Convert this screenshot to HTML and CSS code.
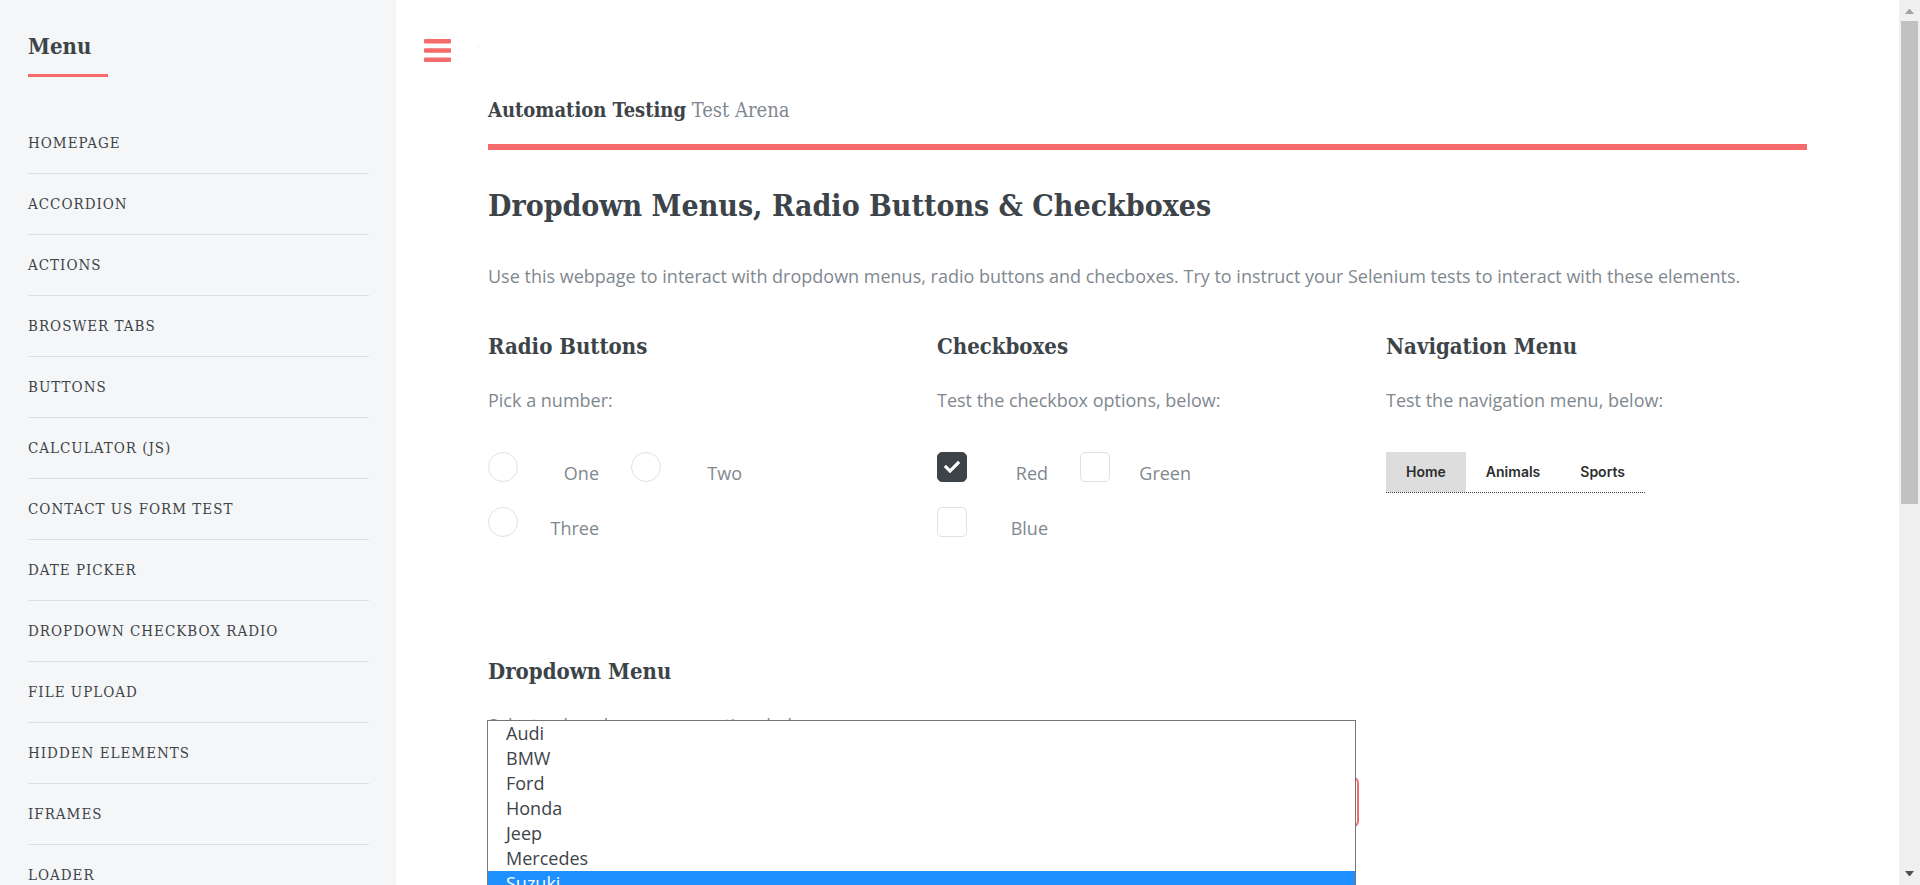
FILE: index.html
```html
<!DOCTYPE html>
<html lang="en">
<head>
<meta charset="utf-8">
<title>Dropdown Menus, Radio Buttons &amp; Checkboxes</title>
<link rel="stylesheet" href="styles.css">
</head>
<body>
<div class="page">
  <aside class="sidebar">
    <h2 class="sidebar-title">Menu</h2>
    <nav>
      <ul class="menu">
        <li><a href="#">Homepage</a></li>
        <li><a href="#">Accordion</a></li>
        <li><a href="#">Actions</a></li>
        <li><a href="#">Broswer Tabs</a></li>
        <li><a href="#">Buttons</a></li>
        <li><a href="#">Calculator (JS)</a></li>
        <li><a href="#">Contact Us Form Test</a></li>
        <li><a href="#">Date Picker</a></li>
        <li><a href="#">Dropdown Checkbox Radio</a></li>
        <li><a href="#">File Upload</a></li>
        <li><a href="#">Hidden Elements</a></li>
        <li><a href="#">iFrames</a></li>
        <li><a href="#">Loader</a></li>
      </ul>
    </nav>
  </aside>

  <div class="rail">
    <button class="toggle" type="button" aria-label="Toggle menu">
      <svg viewBox="0 0 27 23" width="27" height="23"><path d="M1 0h25a1 1 0 0 1 1 1v2.400a1 1 0 0 1-1 1H1a1 1 0 0 1-1-1V1a1 1 0 0 1 1-1zM1 9.300h25a1 1 0 0 1 1 1v2.400a1 1 0 0 1-1 1H1a1 1 0 0 1-1-1v-2.400a1 1 0 0 1 1-1zM1 18.600h25a1 1 0 0 1 1 1V22a1 1 0 0 1-1 1H1a1 1 0 0 1-1-1v-2.400a1 1 0 0 1 1-1z"/></svg>
    </button>
    <span class="speck"></span>
  </div>

  <main class="main">
    <header class="header"><a class="logo" href="#"><strong>Automation Testing</strong> Test Arena</a></header>
    <h1 class="title">Dropdown Menus, Radio Buttons &amp; Checkboxes</h1>
    <p class="intro">Use this webpage to interact with dropdown menus, radio buttons and checboxes. Try to instruct your Selenium tests to interact with these elements.</p>

    <div class="columns">
      <section>
        <h3>Radio Buttons</h3>
        <p>Pick a number:</p>
        <div class="choices">
          <label class="choice"><input type="radio" name="number"><span>One</span></label>
          <label class="choice"><input type="radio" name="number"><span>Two</span></label>
          <label class="choice"><input type="radio" name="number"><span>Three</span></label>
        </div>
      </section>
      <section>
        <h3>Checkboxes</h3>
        <p>Test the checkbox options, below:</p>
        <div class="choices">
          <label class="choice"><input type="checkbox" checked><svg class="tick" viewBox="0 0 512 512" width="16" height="16"><path d="M174 439 8 272c-10-10-10-26 0-36l36-36c10-10 26-10 36 0l112 112L432 72c10-10 26-10 36 0l36 36c10 10 10 26 0 36L210 439c-10 10-26 10-36 0z"/></svg><span>Red</span></label>
          <label class="choice"><input type="checkbox"><span>Green</span></label>
          <label class="choice"><input type="checkbox"><span>Blue</span></label>
        </div>
      </section>
      <section>
        <h3>Navigation Menu</h3>
        <p>Test the navigation menu, below:</p>
        <nav class="tabs"><a class="current" href="#">Home</a><a href="#">Animals</a><a href="#">Sports</a></nav>
      </section>
      <section class="wide">
        <h3>Dropdown Menu</h3>
        <p><label for="cars">Select a dropdown menu option, below:</label></p>
        <div class="picker">
          <select id="cars">
            <option>Audi</option><option>BMW</option><option>Ford</option><option>Honda</option><option>Jeep</option><option>Mercedes</option><option selected>Suzuki</option>
          </select>
          <ul class="popup" role="listbox" aria-label="Cars">
            <li role="option">Audi</li>
            <li role="option">BMW</li>
            <li role="option">Ford</li>
            <li role="option">Honda</li>
            <li role="option">Jeep</li>
            <li role="option">Mercedes</li>
            <li role="option" aria-selected="true">Suzuki</li>
          </ul>
        </div>
      </section>
    </div>
  </main>

  <div class="scrollbar" aria-hidden="true">
    <svg viewBox="0 0 21 21" width="21" height="21"><path fill="#a3a3a3" d="M6 14h9l-4-5h-1z"/></svg>
    <div class="track"><div class="thumb"></div></div>
    <svg viewBox="0 0 21 21" width="21" height="21"><path fill="#505050" d="M6 7h9l-4 5h-1z"/></svg>
  </div>
</div>
</body>
</html>
```
FILE: styles.css
```css
* { box-sizing: border-box; margin: 0; padding: 0; }

body {
  font-family: "Open Sans", "Noto Sans", sans-serif;
  font-size: 18px;
  line-height: 30px;
  color: #7f888f;
  background: #fff;
}

ul { list-style: none; }
a { color: inherit; text-decoration: none; }

h1, h2, h3, .logo, .menu {
  font-family: "Roboto Slab", "DejaVu Serif Condensed", "DejaVu Serif", serif;
}

h1, h2, h3 { color: #3d4449; font-weight: 700; }

.page { display: flex; height: 100vh; overflow: hidden; }

/* Sidebar */
.sidebar { flex: 0 0 396px; padding: 31px 27px 0 28px; background: #f5f6f7; }
.sidebar-title {
  width: 80px;
  padding-bottom: 13px;
  border-bottom: 3px solid #f56a6a;
  font-size: 22px;
  line-height: 30px;
}
.menu { margin-top: 36px; }
.menu li + li { border-top: 1px solid #dcdee0; }
.menu a {
  display: block;
  padding-top: 1px;
  font-size: 15px;
  line-height: 59px;
  letter-spacing: 1px;
  color: #3d4449;
  text-transform: uppercase;
  white-space: nowrap;
}

/* Toggle */
.rail { flex: 0 0 92px; display: flex; gap: 27px; padding: 39px 0 0 28px; }
.toggle { width: 27px; height: 23px; border: 0; background: none; cursor: pointer; }
.toggle svg { display: block; fill: #f56a6a; }
.speck { width: 1px; height: 1px; margin-top: 7px; background: #ffcf90; }

/* Content */
.main { flex: 1; min-width: 0; padding: 95px 92px 0 0; }
.header { padding-bottom: 19px; border-bottom: 6px solid #f56a6a; font-size: 20px; }
.logo { display: block; }
.logo strong { color: #3d4449; }
.title { margin-top: 34px; font-size: 30px; line-height: 44px; }
.intro { margin-top: 33px; }

.columns { display: grid; grid-template-columns: repeat(3, 1fr); column-gap: 28px; row-gap: 119px; margin-top: 40px; }
.columns h3 { font-size: 22px; }
.columns p { margin: 24px 0 37px; }
.wide { grid-column: span 2; }

.choices { display: grid; grid-template-columns: 111px 111px; gap: 25px 32px; }
.choice { position: relative; display: flex; justify-content: space-between; height: 30px; }
.choice span { line-height: 43px; }
.choice input {
  appearance: none;
  width: 30px;
  height: 30px;
  border: 1px solid #dfe1e3;
  border-radius: 5px;
  background: #fff;
}
.choice input[type="radio"] { border-radius: 50%; }
.choice input:checked { border-color: #3d4449; background: #3d4449; }
.tick { position: absolute; left: 7px; top: 7px; fill: #fff; }

.tabs { display: inline-flex; border-bottom: 1px dotted #333; }
.tabs a {
  padding: 0 20px;
  font-family: Inter, "Liberation Sans", Arial, sans-serif;
  font-size: 14px;
  font-weight: 600;
  line-height: 40px;
  color: #2d2d2d;
}
.tabs .current { background: #ddd; }

.picker { position: relative; }
.picker select {
  display: block;
  width: 100%;
  height: 50px;
  padding: 0 18px;
  appearance: none;
  border: 1px solid #f56a6a;
  border-radius: 6px;
  box-shadow: 0 0 0 1px #f56a6a;
  background: #fff;
  color: #3d4449;
  font: inherit;
}
.popup {
  position: absolute;
  top: -57px;
  left: -1px;
  right: 2px;
  border: 1px solid #767676;
  background: #fff;
  color: #3d4449;
}
.popup li { padding-left: 18px; line-height: 25px; }
.popup [aria-selected="true"] { background: #1e90ff; color: #fff; }

/* Scrollbar */
.scrollbar { flex: 0 0 21px; display: flex; flex-direction: column; background: #f0f0f0; }
.scrollbar svg { display: block; flex: none; }
.track { flex: 1; padding: 0 2px; }
.thumb { height: 57.3%; background: #c1c1c1; }
```
